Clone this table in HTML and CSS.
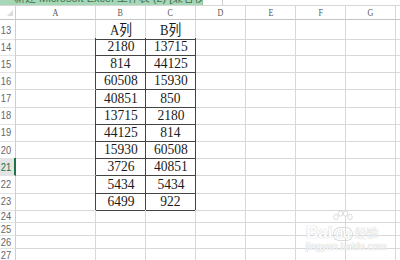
FILE: index.html
```html
<!DOCTYPE html>
<html lang="zh-CN">
<head>
<meta charset="utf-8">
<title>Excel</title>
<link rel="stylesheet" href="styles.css">
</head>
<body>
<div class="sheet">
  <div class="topbar">
    <div class="title"><span>新建 Microsoft Excel 工作表 (2) [兼容模式]</span></div>
    <div class="tbox"></div>
  </div>

  <div class="row hdr">
    <div class="rh corner"><i class="tri"></i></div>
    <div class="ch"><span>A</span></div>
    <div class="ch"><span>B</span></div>
    <div class="ch"><span>C</span></div>
    <div class="ch"><span>D</span></div>
    <div class="ch"><span>E</span></div>
    <div class="ch"><span>F</span></div>
    <div class="ch"><span>G</span></div>
    <div class="ch"></div>
  </div>

  <div class="row r13">
    <div class="rh"><span>13</span></div>
    <div class="c"></div>
    <div class="c hb"><span class="t">A列</span></div>
    <div class="c hb"><span class="t">B列</span></div>
    <div class="c"></div><div class="c"></div><div class="c"></div><div class="c"></div><div class="c"></div>
  </div>

  <div class="row rd">
    <div class="rh"><span>14</span></div>
    <div class="c tl"></div>
    <div class="c tb"><span class="t">2180</span></div>
    <div class="c tb"><span class="t">13715</span></div>
    <div class="c"></div><div class="c"></div><div class="c"></div><div class="c"></div><div class="c"></div>
  </div>
  <div class="row rd">
    <div class="rh"><span>15</span></div>
    <div class="c tl"></div>
    <div class="c tb"><span class="t">814</span></div>
    <div class="c tb"><span class="t">44125</span></div>
    <div class="c"></div><div class="c"></div><div class="c"></div><div class="c"></div><div class="c"></div>
  </div>
  <div class="row rd">
    <div class="rh"><span>16</span></div>
    <div class="c tl"></div>
    <div class="c tb"><span class="t">60508</span></div>
    <div class="c tb"><span class="t">15930</span></div>
    <div class="c"></div><div class="c"></div><div class="c"></div><div class="c"></div><div class="c"></div>
  </div>
  <div class="row rd">
    <div class="rh"><span>17</span></div>
    <div class="c tl"></div>
    <div class="c tb"><span class="t">40851</span></div>
    <div class="c tb"><span class="t">850</span></div>
    <div class="c"></div><div class="c"></div><div class="c"></div><div class="c"></div><div class="c"></div>
  </div>
  <div class="row rd">
    <div class="rh"><span>18</span></div>
    <div class="c tl"></div>
    <div class="c tb"><span class="t">13715</span></div>
    <div class="c tb"><span class="t">2180</span></div>
    <div class="c"></div><div class="c"></div><div class="c"></div><div class="c"></div><div class="c"></div>
  </div>
  <div class="row rd">
    <div class="rh"><span>19</span></div>
    <div class="c tl"></div>
    <div class="c tb"><span class="t">44125</span></div>
    <div class="c tb"><span class="t">814</span></div>
    <div class="c"></div><div class="c"></div><div class="c"></div><div class="c"></div><div class="c"></div>
  </div>
  <div class="row rd">
    <div class="rh"><span>20</span></div>
    <div class="c tl"></div>
    <div class="c tb"><span class="t">15930</span></div>
    <div class="c tb"><span class="t">60508</span></div>
    <div class="c"></div><div class="c"></div><div class="c"></div><div class="c"></div><div class="c"></div>
  </div>
  <div class="row rd">
    <div class="rh sel"><span>21</span></div>
    <div class="c tl"></div>
    <div class="c tb"><span class="t">3726</span></div>
    <div class="c tb"><span class="t">40851</span></div>
    <div class="c"></div><div class="c"></div><div class="c"></div><div class="c"></div><div class="c"></div>
  </div>
  <div class="row rd">
    <div class="rh"><span>22</span></div>
    <div class="c tl"></div>
    <div class="c tb"><span class="t">5434</span></div>
    <div class="c tb"><span class="t">5434</span></div>
    <div class="c"></div><div class="c"></div><div class="c"></div><div class="c"></div><div class="c"></div>
  </div>
  <div class="row rd">
    <div class="rh"><span>23</span></div>
    <div class="c tl"></div>
    <div class="c tb"><span class="t">6499</span></div>
    <div class="c tb"><span class="t">922</span></div>
    <div class="c"></div><div class="c"></div><div class="c"></div><div class="c"></div><div class="c"></div>
  </div>

  <div class="row rs">
    <div class="rh"><span>24</span></div>
    <div class="c"></div><div class="c"></div><div class="c"></div><div class="c"></div><div class="c"></div><div class="c"></div><div class="c"></div><div class="c"></div>
  </div>
  <div class="row rs">
    <div class="rh"><span>25</span></div>
    <div class="c"></div><div class="c"></div><div class="c"></div><div class="c"></div><div class="c"></div><div class="c"></div><div class="c"></div><div class="c"></div>
  </div>
  <div class="row rs">
    <div class="rh"><span>26</span></div>
    <div class="c"></div><div class="c"></div><div class="c"></div><div class="c"></div><div class="c"></div><div class="c"></div><div class="c"></div><div class="c"></div>
  </div>
  <div class="row rs">
    <div class="rh"><span>27</span></div>
    <div class="c"></div><div class="c"></div><div class="c"></div><div class="c"></div><div class="c"></div><div class="c"></div><div class="c"></div><div class="c"></div>
  </div>

  <div class="watermark">
    <div class="wm-logo">
      <span class="wm-bai">Bai</span>
      <span class="wm-du">
        <svg class="paw" width="22" height="18" viewBox="0 0 22 18">
          <ellipse cx="4" cy="6" rx="2.2" ry="2.8"/>
          <ellipse cx="8.5" cy="2.6" rx="2.2" ry="2.6"/>
          <ellipse cx="13.5" cy="2.6" rx="2.2" ry="2.6"/>
          <ellipse cx="18" cy="6" rx="2.2" ry="2.8"/>
        </svg>
        <span class="du">du</span>
      </span>
      <span class="wm-jy">经验</span>
    </div>
    <div class="wm-url">jingyan.baidu.com</div>
  </div>
</div>
</body>
</html>
```

FILE: styles.css
```css
html, body {
  margin: 0;
  padding: 0;
  background: #ffffff;
}

body {
  width: 400px;
  height: 260px;
  overflow: hidden;
  font-family: "Liberation Sans", "Noto Sans CJK SC", sans-serif;
}

.sheet {
  position: relative;
  width: 400px;
  height: 260px;
  overflow: hidden;
}

/* top strip */
.topbar {
  display: flex;
  height: 6px;
  box-sizing: border-box;
  border-bottom: 1px solid #d6d6d6;
  overflow: hidden;
}

.title {
  width: 203px;
  height: 5px;
  background: #a6d7b6;
  overflow: hidden;
  box-sizing: border-box;
  border-right: 1px solid #8cc39f;
}

.title span {
  display: block;
  margin-top: -8px;
  padding-left: 14px;
  font-size: 11px;
  line-height: 13px;
  color: #3f6e50;
  white-space: nowrap;
}

.tbox {
  width: 20px;
  height: 5px;
  box-sizing: border-box;
  border-right: 1px solid #d0d0d0;
}

/* grid rows */
.row {
  display: grid;
  grid-template-columns: 16px 80px repeat(7, 50px);
}

.hdr { height: 14px; }
.r13 { height: 18px; }
.rd  { height: 17.2px; }
.rs  { height: 13px; }

.row > div {
  box-sizing: border-box;
  display: flex;
  align-items: center;
  justify-content: center;
  overflow: visible;
  min-width: 0;
}

/* row header */
.rh {
  border-right: 1px solid #cfcfcf;
  border-bottom: 1px solid #e2e2e2;
  justify-content: flex-end !important;
  padding-right: 4px;
  color: #666;
  font-family: "Liberation Sans", sans-serif;
  font-size: 11px;
}

.rh span {
  display: inline-block;
  transform: scaleX(0.85);
  transform-origin: right center;
  line-height: 11px;
  padding-top: 1px;
}

.rh.sel {
  background: #e4e4e4;
  color: #217346;
  border-right: 2px solid #217346;
  padding-right: 3px;
}

.corner {
  align-items: flex-end !important;
  padding: 0 2px 3px 0;
}

.tri {
  display: block;
  width: 0;
  height: 0;
  border-left: 6px solid transparent;
  border-bottom: 6px solid #dcdcdc;
}

/* column header */
.ch {
  border-right: 1px solid #d8d8d8;
  border-bottom: 1px solid #c4c4c4;
  color: #5a5a5a;
  font-family: "Liberation Serif", serif;
  font-size: 9.5px;
}

.hdr .rh {
  border-bottom: 1px solid #c4c4c4;
}

.ch span {
  display: inline-block;
  transform: scaleX(0.85);
  line-height: 10px;
  padding-top: 1px;
}

/* cells */
.c {
  border-right: 1px solid #d8d8d8;
  border-bottom: 1px solid #d8d8d8;
}

.tl {
  border-right-color: #444444;
}

.tb {
  border-right-color: #444444;
  border-bottom-color: #444444;
}

.hb {
  border-bottom-color: #444444;
}

.t {
  display: inline-block;
  font-family: "Liberation Serif", "Noto Sans CJK SC", serif;
  font-size: 15px;
  line-height: 17px;
  color: #1a1a1a;
  transform: scaleX(0.9);
  white-space: nowrap;
}

.r13 .t {
  padding-top: 2px;
  transform: scaleX(0.85);
}

/* watermark */
.watermark {
  position: absolute;
  left: 306px;
  top: 213px;
  width: 74px;
  color: #ffffff;
  text-shadow: 0 0 1px #c8c8c8, 0 0 1px #c8c8c8;
}

.wm-logo {
  display: flex;
  align-items: flex-end;
  height: 27px;
}

.wm-bai {
  font-family: "Liberation Sans", sans-serif;
  font-weight: bold;
  font-size: 17px;
  line-height: 15px;
}

.wm-du {
  display: flex;
  flex-direction: column;
  align-items: center;
  width: 21px;
}

.paw {
  display: block;
  margin-bottom: -1px;
}

.paw ellipse {
  fill: #ffffff;
  stroke: #d2d2d2;
  stroke-width: 0.8;
}

.du {
  font-family: "Liberation Sans", sans-serif;
  font-weight: bold;
  font-size: 12px;
  line-height: 12px;
  padding: 0 2px;
  border-radius: 6px 6px 5px 5px;
  box-shadow: 0 0 0 1px #dadada;
}

.wm-jy {
  font-family: "Noto Sans CJK SC", sans-serif;
  font-size: 12px;
  line-height: 14px;
  margin-left: 1px;
}

.wm-url {
  font-family: "Liberation Sans", sans-serif;
  font-size: 10px;
  line-height: 11px;
  margin-top: 1px;
  white-space: nowrap;
}
```
